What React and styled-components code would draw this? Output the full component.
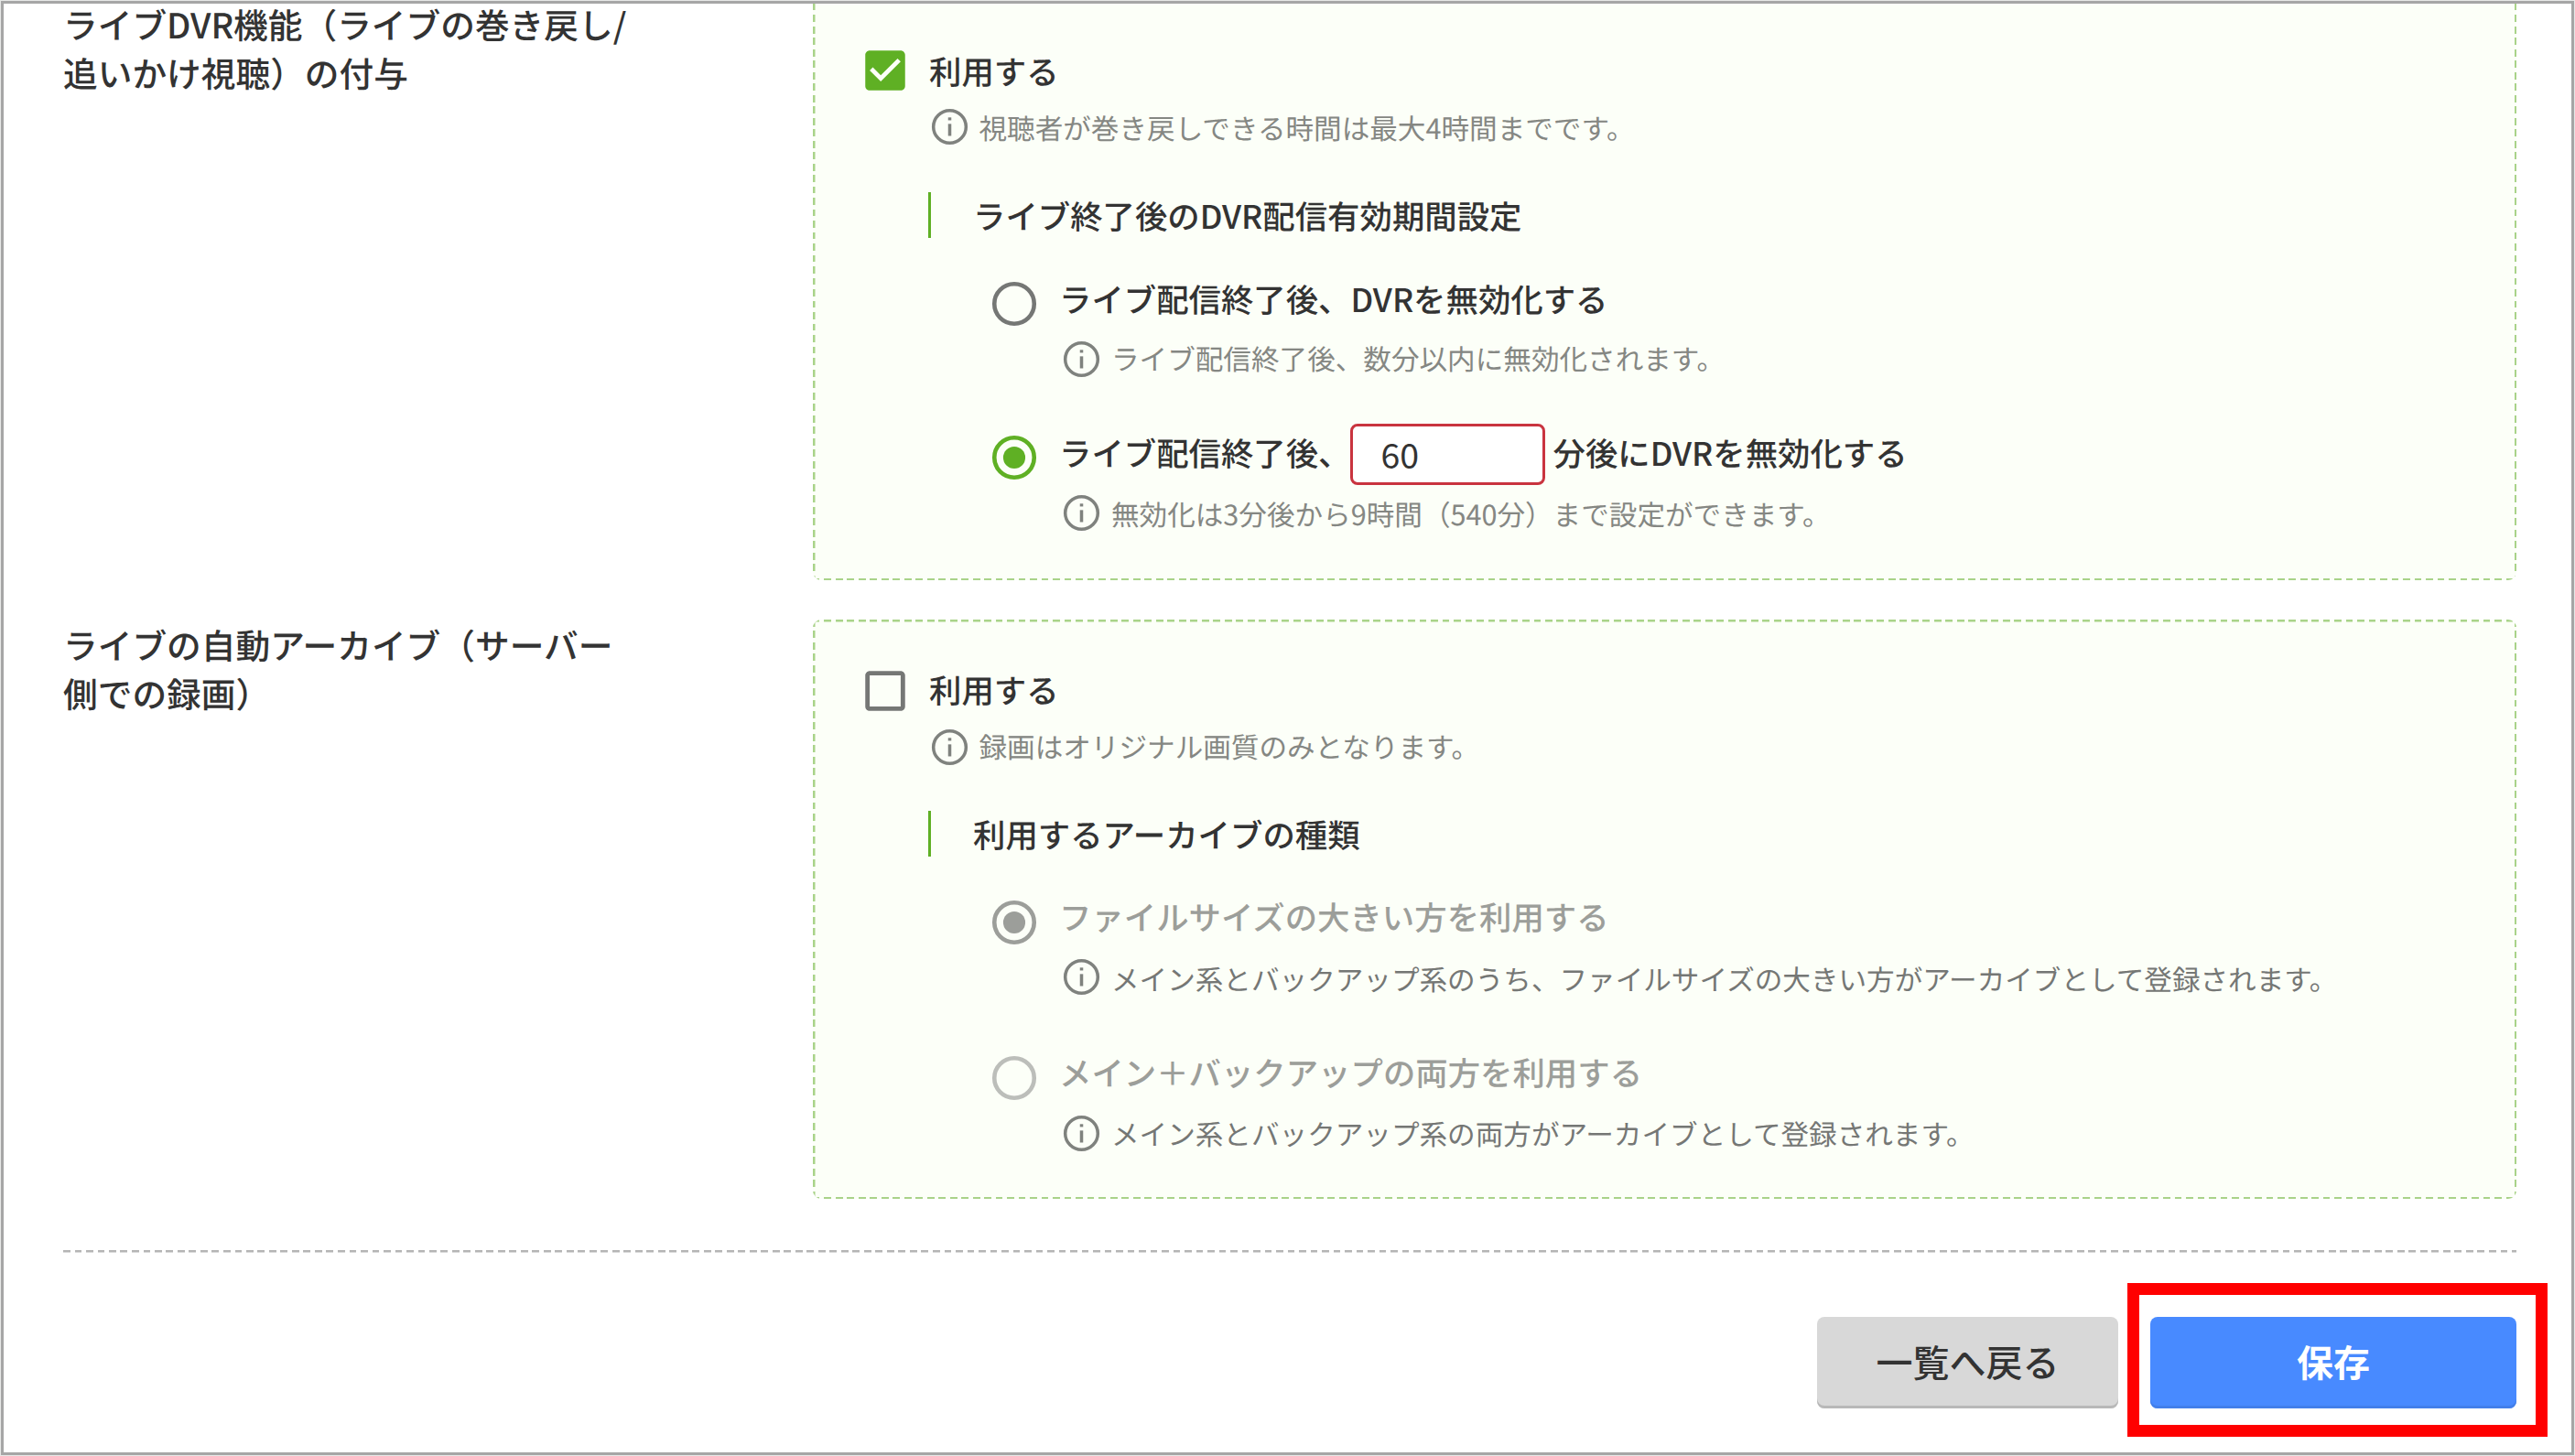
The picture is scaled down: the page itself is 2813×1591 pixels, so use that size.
import React from "react"
import styled, { createGlobalStyle } from "styled-components"

const green = "#5fb024"
const ink = "#333333"
const muted = "#858783"

const GlobalStyle = createGlobalStyle`
  * {
    box-sizing: border-box;
  }
  body {
    margin: 0;
    background: #fff;
    color: ${ink};
    font-family: "Noto Sans CJK JP", "Noto Sans", sans-serif;
    text-rendering: geometricPrecision;
  }
`

const Page = styled.main`
  width: 2813px;
  height: 1591px;
  padding: 0 60px 0 65px;
  border: 4px solid #a6a6a6;
  outline: 1px solid #e6e8e6;
  outline-offset: -1px;
  overflow: hidden;
  background: #fff;
`

const Field = styled.section`
  display: grid;
  grid-template-columns: 819px 1fr;
  height: ${(p) => p.$height}px;
  margin-bottom: 43px;
`

const FieldLabel = styled.h2`
  margin: 0;
  margin-top: ${(p) => p.$top}px;
  font-size: 37.7px;
  line-height: 52.5px;
  font-weight: 500;
  white-space: nowrap;
`

/* dashes are drawn with gradients to get a 7.5px / 5px rhythm */
const Panel = styled.div`
  --dash: #a9d389;
  padding: ${(p) => p.$top}px 0 0 58.5px;
  border-radius: ${(p) => (p.$open ? "0 0 9px 9px" : "9px")};
  background-color: #fcfff8;
  background-image: repeating-linear-gradient(90deg, var(--dash) 0 7.5px, transparent 7.5px 12.5px),
    repeating-linear-gradient(90deg, var(--dash) 0 7.5px, transparent 7.5px 12.5px),
    repeating-linear-gradient(180deg, var(--dash) 0 7.5px, transparent 7.5px 12.5px),
    repeating-linear-gradient(180deg, var(--dash) 0 7.5px, transparent 7.5px 12.5px);
  background-size: 100% ${(p) => (p.$open ? "0" : "2.5px")}, 100% 2.5px, 2.5px 100%, 2.5px 100%;
  background-position: left top, left bottom, left top, right top;
  background-repeat: no-repeat;
`

const CheckRow = styled.label`
  display: flex;
  align-items: center;
  height: 44px;
  font-size: 35.4px;
  line-height: 44px;
  font-weight: 500;
  svg {
    flex: none;
    width: 58px;
    height: 58px;
    margin: 0 19px 0 -8.5px;
    color: ${(p) => (p.$checked ? green : "#757775")};
  }
  span {
    padding-top: ${(p) => (p.$checked ? 1 : 0)}px;
    padding-bottom: ${(p) => (p.$checked ? 0 : 3)}px;
  }
`

const Note = styled.p`
  display: flex;
  align-items: center;
  height: 40px;
  margin: ${(p) => p.$gap}px 0 0 ${(p) => p.$indent}px;
  font-size: 30.6px;
  line-height: 40px;
  font-weight: 400;
  color: ${(p) => (p.$dark ? "#757775" : muted)};
  white-space: nowrap;
  svg {
    flex: none;
    width: 47px;
    height: 47px;
    margin-right: 9px;
    color: #7f827e;
  }
  span {
    padding-top: ${(p) => p.$drop || 0}px;
    padding-bottom: ${(p) => p.$lift || 0}px;
  }
`

const SubHeading = styled.h3`
  height: 50px;
  margin: ${(p) => p.$gap}px 0 0 67px;
  padding-left: 46.5px;
  border-left: 3px solid ${green};
  font-size: 35.4px;
  line-height: 52px;
  font-weight: 500;
`

const RadioRow = styled.label`
  display: flex;
  align-items: center;
  height: 68px;
  margin: ${(p) => p.$gap}px 0 0 132.5px;
  font-size: 35.4px;
  font-weight: 500;
  color: ${(p) => (p.$disabled ? "#9c9e9a" : ink)};
  white-space: nowrap;
  svg {
    flex: none;
    width: 58px;
    height: 58px;
    margin-right: 20px;
    color: ${(p) => p.$mark};
  }
  span {
    padding-bottom: ${(p) => (p.$disabled ? 12 : 11)}px;
    line-height: 50px;
  }
`

const Minutes = styled.input`
  width: 213px;
  height: 67px;
  margin: 0 9px 8px -1px;
  padding: 0 0 2px 31px;
  border: 3px solid #c9343f;
  border-radius: 8px;
  outline: none;
  background: #fff;
  color: ${ink};
  font-family: inherit;
  font-size: 37.5px;
`

const Footer = styled.footer`
  display: flex;
  justify-content: flex-end;
  gap: 35px;
  padding-top: 73px;
  margin-top: 56px;
  background: repeating-linear-gradient(90deg, #b5b5b5 0 7.5px, transparent 7.5px 12.5px) left top /
    100% 2.5px no-repeat;
`

const Button = styled.button`
  display: block;
  width: ${(p) => (p.$primary ? 400 : 329)}px;
  height: 100px;
  padding: 0 0 4px;
  border: 0;
  border-radius: 8px;
  background: ${(p) => (p.$primary ? "#488aff" : "#d8d8d8")};
  box-shadow: inset 0 -3px 0 ${(p) => (p.$primary ? "#427fea" : "#b8b8b8")};
  color: ${(p) => (p.$primary ? "#fff" : ink)};
  font-family: inherit;
  font-size: 40px;
  font-weight: ${(p) => (p.$primary ? 700 : 500)};
`

const Highlight = styled.div`
  position: relative;
  &::after {
    content: "";
    position: absolute;
    inset: -37px -34px -31px -25px;
    border: 13px solid #ff0000;
    pointer-events: none;
  }
`

const CheckboxIcon = ({ checked }) => (
  <svg viewBox="0 0 24 24" fill="currentColor">
    {checked ? (
      <path d="M19 3H5c-1.11 0-2 .9-2 2v14c0 1.1.89 2 2 2h14c1.11 0 2-.9 2-2V5c0-1.1-.89-2-2-2zm-9 14l-5-5 1.41-1.41L10 14.17l7.59-7.59L19 8l-9 9z" />
    ) : (
      <path d="M19 5v14H5V5h14m0-2H5c-1.1 0-2 .9-2 2v14c0 1.1.9 2 2 2h14c1.1 0 2-.9 2-2V5c0-1.1-.9-2-2-2z" />
    )}
  </svg>
)

const RadioIcon = ({ checked }) => (
  <svg viewBox="0 0 24 24">
    <circle cx="12" cy="12" r="9" fill="none" stroke="currentColor" strokeWidth="1.9" />
    {checked && <circle cx="12" cy="12" r="5" fill="currentColor" />}
  </svg>
)

const InfoIcon = () => (
  <svg viewBox="0 0 24 24" fill="currentColor">
    <circle cx="12" cy="12" r="9.1" fill="none" stroke="currentColor" strokeWidth="1.8" />
    <rect x="11.1" y="6.8" width="1.8" height="1.6" />
    <rect x="11.1" y="10.4" width="1.8" height="6.7" />
  </svg>
)

const Info = ({ children, indent = 211.5, ...rest }) => (
  <Note $indent={indent} {...rest}>
    <InfoIcon />
    <span>{children}</span>
  </Note>
)

const App = () => (
  <>
    <GlobalStyle />
    <Page>
      <Field $height={630}>
        <FieldLabel $top={-4}>
          ライブDVR機能（ライブの巻き戻し/
          <br />
          追いかけ視聴）の付与
        </FieldLabel>
        <Panel $open $top={51}>
          <CheckRow $checked>
            <CheckboxIcon checked />
            <span>利用する</span>
          </CheckRow>
          <Info indent={67} $gap={19} $drop={2}>
            視聴者が巻き戻しできる時間は最大4時間までです。
          </Info>
          <SubHeading $gap={52}>ライブ終了後のDVR配信有効期間設定</SubHeading>
          <RadioRow $gap={38} $mark="#757775">
            <RadioIcon />
            <span>ライブ配信終了後、DVRを無効化する</span>
          </RadioRow>
          <Info $gap={6} $lift={2}>
            ライブ配信終了後、数分以内に無効化されます。
          </Info>
          <RadioRow $gap={54} $mark={green}>
            <RadioIcon checked />
            <span>ライブ配信終了後、</span>
            <Minutes defaultValue="60" />
            <span>分後にDVRを無効化する</span>
          </RadioRow>
          <Info $gap={6} $drop={2}>
            無効化は3分後から9時間（540分）まで設定ができます。
          </Info>
        </Panel>
      </Field>

      <Field $height={633}>
        <FieldLabel $top={1}>
          ライブの自動アーカイブ（サーバー
          <br />
          側での録画）
        </FieldLabel>
        <Panel $top={56}>
          <CheckRow>
            <CheckboxIcon />
            <span>利用する</span>
          </CheckRow>
          <Info indent={67} $gap={19} $lift={2}>
            録画はオリジナル画質のみとなります。
          </Info>
          <SubHeading $gap={50}>利用するアーカイブの種類</SubHeading>
          <RadioRow $gap={38} $disabled $mark="#9c9e9a">
            <RadioIcon checked />
            <span>ファイルサイズの大きい方を利用する</span>
          </RadioRow>
          <Info $gap={5} $drop={4} $dark>
            メイン系とバックアップ系のうち、ファイルサイズの大きい方がアーカイブとして登録されます。
          </Info>
          <RadioRow $gap={57} $disabled $mark="#bcbeba">
            <RadioIcon />
            <span>メイン＋バックアップの両方を利用する</span>
          </RadioRow>
          <Info $gap={6} $lift={1} $dark>
            メイン系とバックアップ系の両方がアーカイブとして登録されます。
          </Info>
        </Panel>
      </Field>

      <Footer>
        <Button>一覧へ戻る</Button>
        <Highlight>
          <Button $primary>保存</Button>
        </Highlight>
      </Footer>
    </Page>
  </>
)

export default App
